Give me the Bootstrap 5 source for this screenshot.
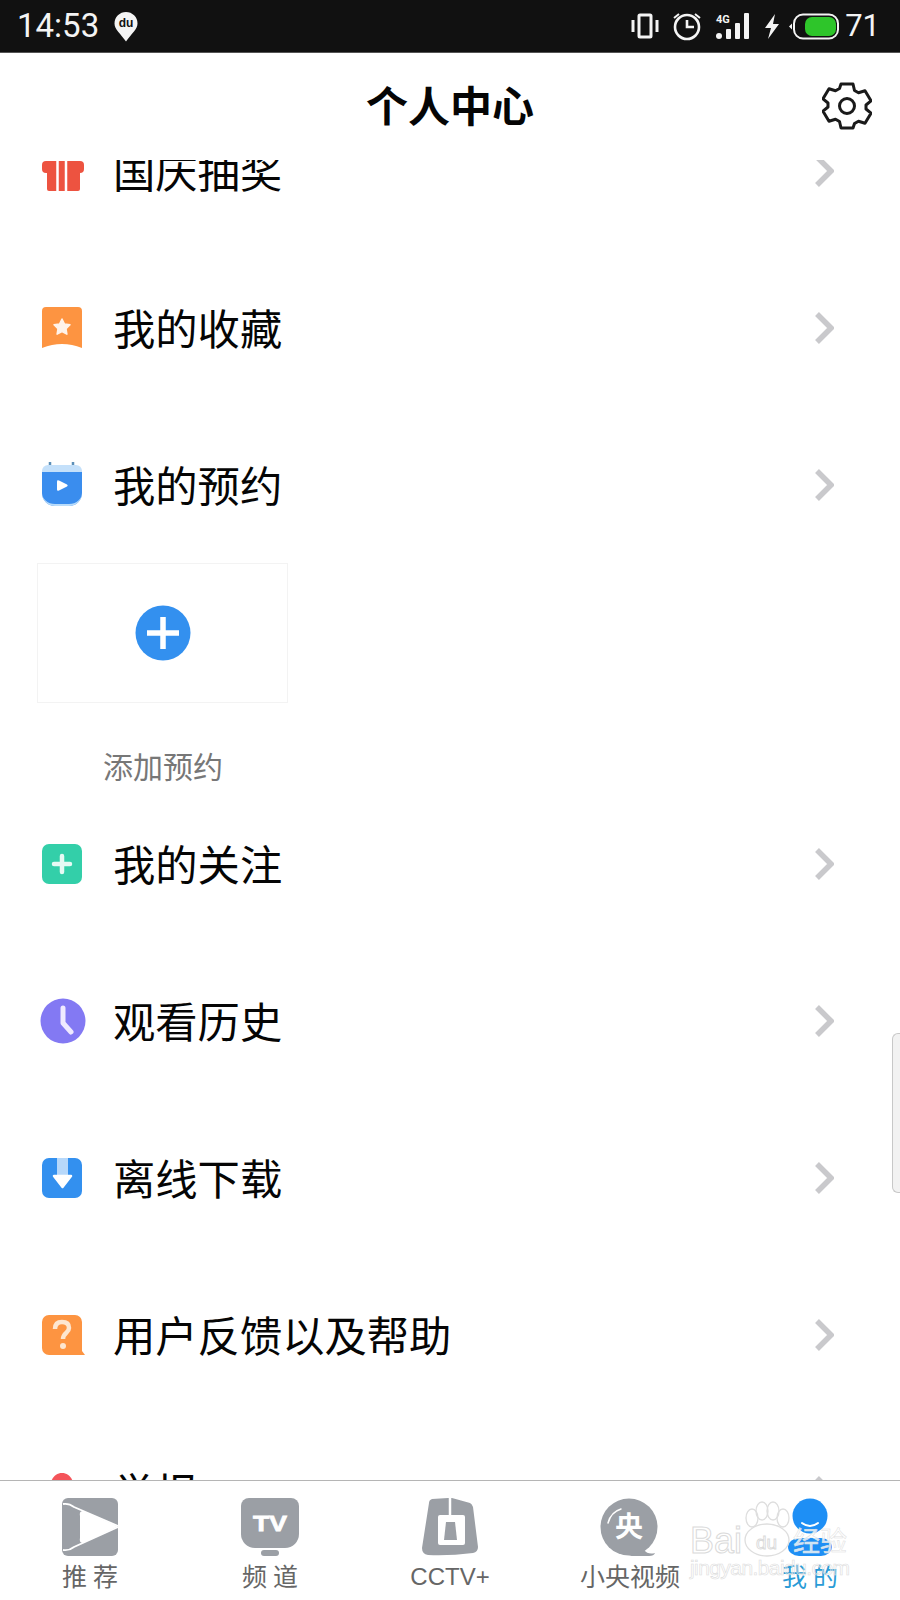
<!DOCTYPE html>
<html lang="zh-CN">
<head>
  <meta charset="UTF-8" />
  <meta name="viewport" content="width=device-width, initial-scale=1.0"/>
  <title>个人中心</title>
  <link rel="stylesheet" href="https://cdn.jsdelivr.net/npm/bootstrap@5.3.2/dist/css/bootstrap.min.css">
  <style>
    body {
      background: #fff;
      font-family: "Noto Sans CJK SC", "Noto Sans", sans-serif;
      color: #050505;
    }
    .phone-page {
      width: 900px;
      height: 1600px;
      overflow: hidden;
    }
    .status-strip {
      height: 53px;
      background: #111;
      color: #f4f4f4;
      font-family: Roboto, sans-serif;
      font-size: 33px;
      padding: 0 20px 0 17px;
      border-bottom: 1px solid #555;
    }
    .st-pin { margin-left: 15px; }
    .st-alarm { margin-left: 13px; }
    .st-signal { margin-left: 13px; }
    .st-bolt { margin-left: 13px; }
    .st-batt { margin-left: 9px; }
    .st-level { margin-left: 6px; font-size: 31px; }
    .page-head {
      height: 107px;
      padding-bottom: 6px;
    }
    .page-title {
      font-size: 42px;
      font-weight: 700;
      line-height: 1;
      margin: 0;
    }
    .gear-btn {
      top: 29px;
      right: 28px;
    }
    .scroll-zone {
      min-height: 0;
    }
    .scroll-inner {
      margin-top: -68px;
    }
    .menu-row {
      height: 157px;
      padding: 0 66px 0 42px;
      font-size: 42.3px;
    }
    .menu-row > span {
      padding-bottom: 2px;
    }
    .menu-ico {
      width: 44px;
      margin-right: 27px;
    }
    .menu-ico-wide {
      width: 46px;
      margin-left: -2px;
    }
    .add-block {
      height: 222px;
      padding-left: 37px;
    }
    .add-box {
      width: 251px;
      height: 140px;
      border: 1px solid #f3f3f3;
    }
    .add-label {
      margin: 44px 0 0 66px;
      font-size: 30px;
      line-height: 36px;
      color: #777;
    }
    .side-handle {
      right: 0;
      top: 1033px;
      width: 8px;
      height: 160px;
      background: #f2f2f2;
      border: 1px solid #c8c8c8;
      border-right: 0;
      border-radius: 6px 0 0 6px;
    }
    .tab-strip {
      height: 120px;
      border-top: 1px solid #b5b5b5;
      background: #fff;
    }
    .tab-cell {
      padding-top: 17px;
      font-size: 25px;
      line-height: 30px;
      color: #666;
      text-align: center;
    }
    .tab-ico {
      height: 58px;
      margin-bottom: 4px;
    }
    .tab-gap {
      letter-spacing: 6px;
      margin-right: -6px;
    }
    .tab-latin {
      font-family: "Liberation Sans", sans-serif;
      font-size: 24px;
      padding-top: 2px;
    }
    .tab-on {
      color: #2a9bd6;
    }
    .wm-stamp {
      right: 48px;
      top: 1494px;
      width: 165px;
      height: 90px;
      pointer-events: none;
    }
  </style>
</head>
<body>

<div class="phone-page d-flex flex-column position-relative">

  <!-- status bar -->
  <div class="status-strip d-flex align-items-center flex-shrink-0">
    <span>14:53</span>
    <svg class="st-pin" width="24" height="31" viewBox="0 0 24 31">
      <path d="M12 1a11.500 11.500 0 0 1 11.500 11.500c0 6-6 10-11.500 18C6.500 22.500.5 18.500.5 12.500A11.500 11.500 0 0 1 12 1z" fill="#f4f4f4"/>
      <text x="12" y="16" text-anchor="middle" font-family="Liberation Sans" font-size="12" font-weight="700" fill="#111">du</text>
    </svg>
    <div class="ms-auto d-flex align-items-center">
      <svg width="28" height="26" viewBox="0 0 28 26">
        <rect x="8" y="2" width="12" height="22" rx="1" fill="none" stroke="#f4f4f4" stroke-width="3"/>
        <path d="M2 7v12M26 7v12" stroke="#f4f4f4" stroke-width="3"/>
      </svg>
      <svg class="st-alarm" width="30" height="30" viewBox="0 0 30 30">
        <circle cx="15" cy="16" r="12" fill="none" stroke="#f4f4f4" stroke-width="2.600"/>
        <path d="M15 9v7h7" fill="none" stroke="#f4f4f4" stroke-width="2.600"/>
        <path d="M2 7l5-4M28 7l-5-4" stroke="#f4f4f4" stroke-width="2"/>
      </svg>
      <svg class="st-signal" width="36" height="28" viewBox="0 0 36 28">
        <text x="1" y="11" font-family="Roboto" font-size="11" font-weight="700" fill="#f4f4f4">4G</text>
        <circle cx="4" cy="24" r="3" fill="#f4f4f4"/>
        <rect x="11" y="17" width="5" height="10" rx="1" fill="#f4f4f4"/>
        <rect x="20" y="11" width="5" height="16" rx="1" fill="#f4f4f4"/>
        <rect x="29" y="1" width="5" height="26" rx="1" fill="#f4f4f4"/>
      </svg>
      <svg class="st-bolt" width="16" height="25" viewBox="0 0 16 25">
        <path d="M11 0L1 14h6l-3 11 11-15H9z" fill="#f4f4f4"/>
      </svg>
      <svg class="st-batt" width="50" height="27" viewBox="0 0 50 27">
        <path d="M0 13.500l3-3v6z" fill="#f4f4f4"/>
        <rect x="5" y="1.500" width="44" height="24" rx="9" fill="none" stroke="#f4f4f4" stroke-width="2"/>
        <rect x="16" y="4" width="31" height="19" rx="7" fill="#2ec52a"/>
      </svg>
      <span class="st-level">71</span>
    </div>
  </div>

  <!-- page header -->
  <div class="page-head d-flex align-items-center justify-content-center position-relative flex-shrink-0">
    <h1 class="page-title">个人中心</h1>
    <svg class="gear-btn position-absolute" width="50" height="48" viewBox="0 0 50 48">
      <path d="M19 2h12l1.500 6.500 4 2.300 6.500-2 6 10-5 4.200v4l5 4.200-6 10-6.500-2-4 2.300L31 46H19l-1.500-6.500-4-2.300-6.500 2-6-10 5-4.200v-4L1 16.800l6-10 6.500 2 4-2.300z" fill="none" stroke="#1a1a1a" stroke-width="3" stroke-linejoin="round"/>
      <circle cx="25" cy="24" r="7.500" fill="none" stroke="#1a1a1a" stroke-width="3"/>
    </svg>
  </div>

  <!-- scrolled list -->
  <div class="scroll-zone flex-grow-1 overflow-hidden">
    <div class="scroll-inner">

      <div class="menu-row d-flex align-items-center">
        <svg class="menu-ico" width="44" height="40" viewBox="0 0 44 40">
          <rect x="0" y="10" width="42" height="12" rx="4" fill="#ed5340"/>
          <rect x="5" y="18" width="33" height="22" rx="2" fill="#ed5340"/>
          <path d="M15.500 10v30M24 10v30" stroke="#fff" stroke-width="2.500"/>
        </svg>
        <span>国庆抽奖</span>
        <svg class="ms-auto" width="20" height="34" viewBox="0 0 20 34"><path d="M3 3l14 14L3 31" fill="none" stroke="#c9c9cc" stroke-width="5.500"/></svg>
      </div>

      <div class="menu-row d-flex align-items-center">
        <svg class="menu-ico" width="44" height="42" viewBox="0 0 44 42">
          <path d="M4 0h32a4 4 0 0 1 4 4v37q-10-4-20-4T0 41V4a4 4 0 0 1 4-4z" fill="#fd9441"/>
          <path d="M20 12l2.500 5 5.500.8-4 3.900.9 5.500-4.900-2.600-4.900 2.600.9-5.500-4-3.900 5.500-.8z" fill="#fff3ea" stroke="#fff3ea" stroke-width="1.500" stroke-linejoin="round"/>
        </svg>
        <span>我的收藏</span>
        <svg class="ms-auto" width="20" height="34" viewBox="0 0 20 34"><path d="M3 3l14 14L3 31" fill="none" stroke="#c9c9cc" stroke-width="5.500"/></svg>
      </div>

      <div class="menu-row d-flex align-items-center">
        <svg class="menu-ico" width="44" height="46" viewBox="0 0 44 46">
          <path d="M8 0v6M31 0v6" stroke="#5c8fb8" stroke-width="2.500"/>
          <path d="M6 3h28a6 6 0 0 1 6 6v3H0V9a6 6 0 0 1 6-6z" fill="#c4e0fa"/>
          <path d="M0 10h40v21a13 13 0 0 1-13 13H13A13 13 0 0 1 0 31z" fill="#3a8dee"/>
          <path d="M0 31a13 13 0 0 0 13 13h14a13 13 0 0 0 13-13 13 11 0 0 1-13 11H13A13 11 0 0 1 0 31z" fill="#b9dcfa"/>
          <path d="M15 19.500q0-2 2-1l8 4q1.500 1 0 2l-8 4q-2 1-2-1z" fill="#fff"/>
        </svg>
        <span>我的预约</span>
        <svg class="ms-auto" width="20" height="34" viewBox="0 0 20 34"><path d="M3 3l14 14L3 31" fill="none" stroke="#c9c9cc" stroke-width="5.500"/></svg>
      </div>

      <div class="add-block">
        <div class="add-box d-flex align-items-center justify-content-center">
          <svg width="56" height="56" viewBox="0 0 56 56">
            <circle cx="28" cy="28" r="27.500" fill="#3390ef"/>
            <path d="M12 28h32M28 12v32" stroke="#fff" stroke-width="5.500"/>
          </svg>
        </div>
        <div class="add-label">添加预约</div>
      </div>

      <div class="menu-row d-flex align-items-center">
        <svg class="menu-ico" width="44" height="40" viewBox="0 0 44 40">
          <rect width="40" height="40" rx="7" fill="#33cfa9"/>
          <path d="M12 20h16M20 12v16" stroke="#e6faf4" stroke-width="4.500" stroke-linecap="round"/>
        </svg>
        <span>我的关注</span>
        <svg class="ms-auto" width="20" height="34" viewBox="0 0 20 34"><path d="M3 3l14 14L3 31" fill="none" stroke="#c9c9cc" stroke-width="5.500"/></svg>
      </div>

      <div class="menu-row d-flex align-items-center">
        <svg class="menu-ico menu-ico-wide" width="46" height="46" viewBox="0 0 46 46">
          <circle cx="23" cy="23" r="22.500" fill="#8379f3"/>
          <path d="M23 10v15l8 9" fill="none" stroke="#efeaff" stroke-width="5" stroke-linecap="round" stroke-linejoin="round"/>
        </svg>
        <span>观看历史</span>
        <svg class="ms-auto" width="20" height="34" viewBox="0 0 20 34"><path d="M3 3l14 14L3 31" fill="none" stroke="#c9c9cc" stroke-width="5.500"/></svg>
      </div>

      <div class="menu-row d-flex align-items-center">
        <svg class="menu-ico" width="44" height="40" viewBox="0 0 44 40">
          <rect width="40" height="40" rx="7" fill="#3390ef"/>
          <rect x="15" y="0" width="11" height="20" fill="#b7d8fa"/>
          <path d="M12 18h17L20.500 29z" fill="#fff" stroke="#fff" stroke-width="2.500" stroke-linejoin="round"/>
        </svg>
        <span>离线下载</span>
        <svg class="ms-auto" width="20" height="34" viewBox="0 0 20 34"><path d="M3 3l14 14L3 31" fill="none" stroke="#c9c9cc" stroke-width="5.500"/></svg>
      </div>

      <div class="menu-row d-flex align-items-center">
        <svg class="menu-ico" width="44" height="40" viewBox="0 0 44 40">
          <path d="M7 0h26a7 7 0 0 1 7 7v29l3 4H7a7 7 0 0 1-7-7V7a7 7 0 0 1 7-7z" fill="#fd9441"/>
          <path d="M13 14q0-7 7-7t7 6c0 5-6 5-6 11" fill="none" stroke="#fde6d0" stroke-width="4.500"/>
          <circle cx="21" cy="31" r="3" fill="#fde6d0"/>
        </svg>
        <span>用户反馈以及帮助</span>
        <svg class="ms-auto" width="20" height="34" viewBox="0 0 20 34"><path d="M3 3l14 14L3 31" fill="none" stroke="#c9c9cc" stroke-width="5.500"/></svg>
      </div>

      <div class="menu-row d-flex align-items-center">
        <svg class="menu-ico" width="44" height="40" viewBox="0 0 44 40">
          <path d="M20 1c5 0 9 3 11 9l5 23H4l5-23C11 4 15 1 20 1z" fill="#f4545a"/>
        </svg>
        <span>举报</span>
        <svg class="ms-auto" width="20" height="34" viewBox="0 0 20 34"><path d="M3 3l14 14L3 31" fill="none" stroke="#c9c9cc" stroke-width="5.500"/></svg>
      </div>

    </div>
  </div>

  <!-- bottom tabs -->
  <div class="tab-strip row g-0 flex-shrink-0">
    <div class="col tab-cell">
      <svg class="tab-ico d-block mx-auto" width="56" height="58" viewBox="0 0 56 58">
        <rect width="56" height="58" rx="6" fill="#9b9fa5"/>
        <path d="M21 13L56 28.500 21 45q-4 0-3-5V18q-1-5 3-5z" fill="#fff"/>
        <path d="M1 6q6-1 11 3L56 28M1 52q6 1 11-3l44-20" fill="none" stroke="#fff" stroke-width="1.800"/>
      </svg>
      <div><span class="tab-gap">推荐</span></div>
    </div>
    <div class="col tab-cell">
      <svg class="tab-ico d-block mx-auto" width="58" height="58" viewBox="0 0 58 58">
        <path d="M8 0h42a8 8 0 0 1 8 8v28a14 14 0 0 1-14 14H14A14 14 0 0 1 0 36V8a8 8 0 0 1 8-8z" fill="#9b9fa5"/>
        <rect x="20" y="52" width="18" height="6" rx="3" fill="#9b9fa5"/>
        <text x="12" y="33" font-family="Liberation Sans" font-size="22" font-weight="700" fill="#fff" stroke="#fff" stroke-width=".8" textLength="34" lengthAdjust="spacingAndGlyphs">TV</text>
      </svg>
      <div><span class="tab-gap">频道</span></div>
    </div>
    <div class="col tab-cell">
      <svg class="tab-ico d-block mx-auto" width="56" height="58" viewBox="0 0 56 58">
        <path d="M10 1L26 0h4l18 5q2 1 3 4l5 40q0 5-5 6-24 3-45 2-6-1-6-7L7 5q0-3 3-4z" fill="#9b9fa5"/>
        <path d="M28 0v18" stroke="#fff" stroke-width="2.500"/>
        <rect x="16" y="17" width="27" height="30" rx="2" fill="#fff"/>
        <path d="M24 24h9l2 18H22z" fill="#9b9fa5"/>
      </svg>
      <div class="tab-latin">CCTV+</div>
    </div>
    <div class="col tab-cell">
      <svg class="tab-ico d-block mx-auto" width="60" height="58" viewBox="0 0 60 58">
        <circle cx="29" cy="29" r="28.500" fill="#9b9fa5"/>
        <path d="M44 52q4 5 11 3-1 3-6 3H29z" fill="#9b9fa5"/>
        <path d="M8 25q3-11 13-14" fill="none" stroke="#fff" stroke-width="1.500" stroke-linecap="round"/>
        <text x="29" y="39" text-anchor="middle" font-family="Noto Sans CJK SC" font-size="28" font-weight="700" fill="#fff">央</text>
      </svg>
      <div>小央视频</div>
    </div>
    <div class="col tab-cell tab-on">
      <svg class="tab-ico d-block mx-auto" width="44" height="58" viewBox="0 0 44 58">
        <circle cx="22" cy="18" r="17.500" fill="#1e8ff5"/>
        <path d="M14 25q8 6 16 0" fill="none" stroke="#fff" stroke-width="2" stroke-linecap="round"/>
        <path d="M11 40h22a11 9 0 0 1 0 18H11a11 9 0 0 1 0-18z" fill="#1e8ff5"/>
      </svg>
      <div><span class="tab-gap">我的</span></div>
    </div>
  </div>

  <!-- things lying over the content -->
  <div class="side-handle position-absolute"></div>
  <svg class="wm-stamp position-absolute" viewBox="0 0 165 90">
    <g fill="none" stroke="#dedede" stroke-width="1.300">
      <ellipse cx="65" cy="24" rx="6" ry="9"/>
      <ellipse cx="75" cy="17" rx="6" ry="9"/>
      <ellipse cx="86" cy="17" rx="6" ry="9"/>
      <ellipse cx="96" cy="24" rx="6" ry="9"/>
      <ellipse cx="80" cy="46" rx="22" ry="16"/>
    </g>
    <text x="3" y="59" font-family="Liberation Sans" font-size="36" fill="#fff" fill-opacity=".5" stroke="#dadada" stroke-width="1" textLength="52" lengthAdjust="spacing">Bai</text>
    <text x="69" y="55" font-family="Liberation Sans" font-size="19" fill="none" stroke="#dadada" stroke-width=".9">du</text>
    <text x="106" y="57" font-family="Noto Sans CJK SC" font-size="27" fill="#fff" fill-opacity=".8" stroke="#e0e0e0" stroke-width=".5">经验</text>
    <text x="3" y="81" font-family="Liberation Sans" font-size="21" fill="#fff" fill-opacity=".3" stroke="#dcdcdc" stroke-width=".6" textLength="160">jingyan.baidu.com</text>
  </svg>

</div>

<script src="https://cdn.jsdelivr.net/npm/bootstrap@5.3.2/dist/js/bootstrap.bundle.min.js"></script>
</body>
</html>
